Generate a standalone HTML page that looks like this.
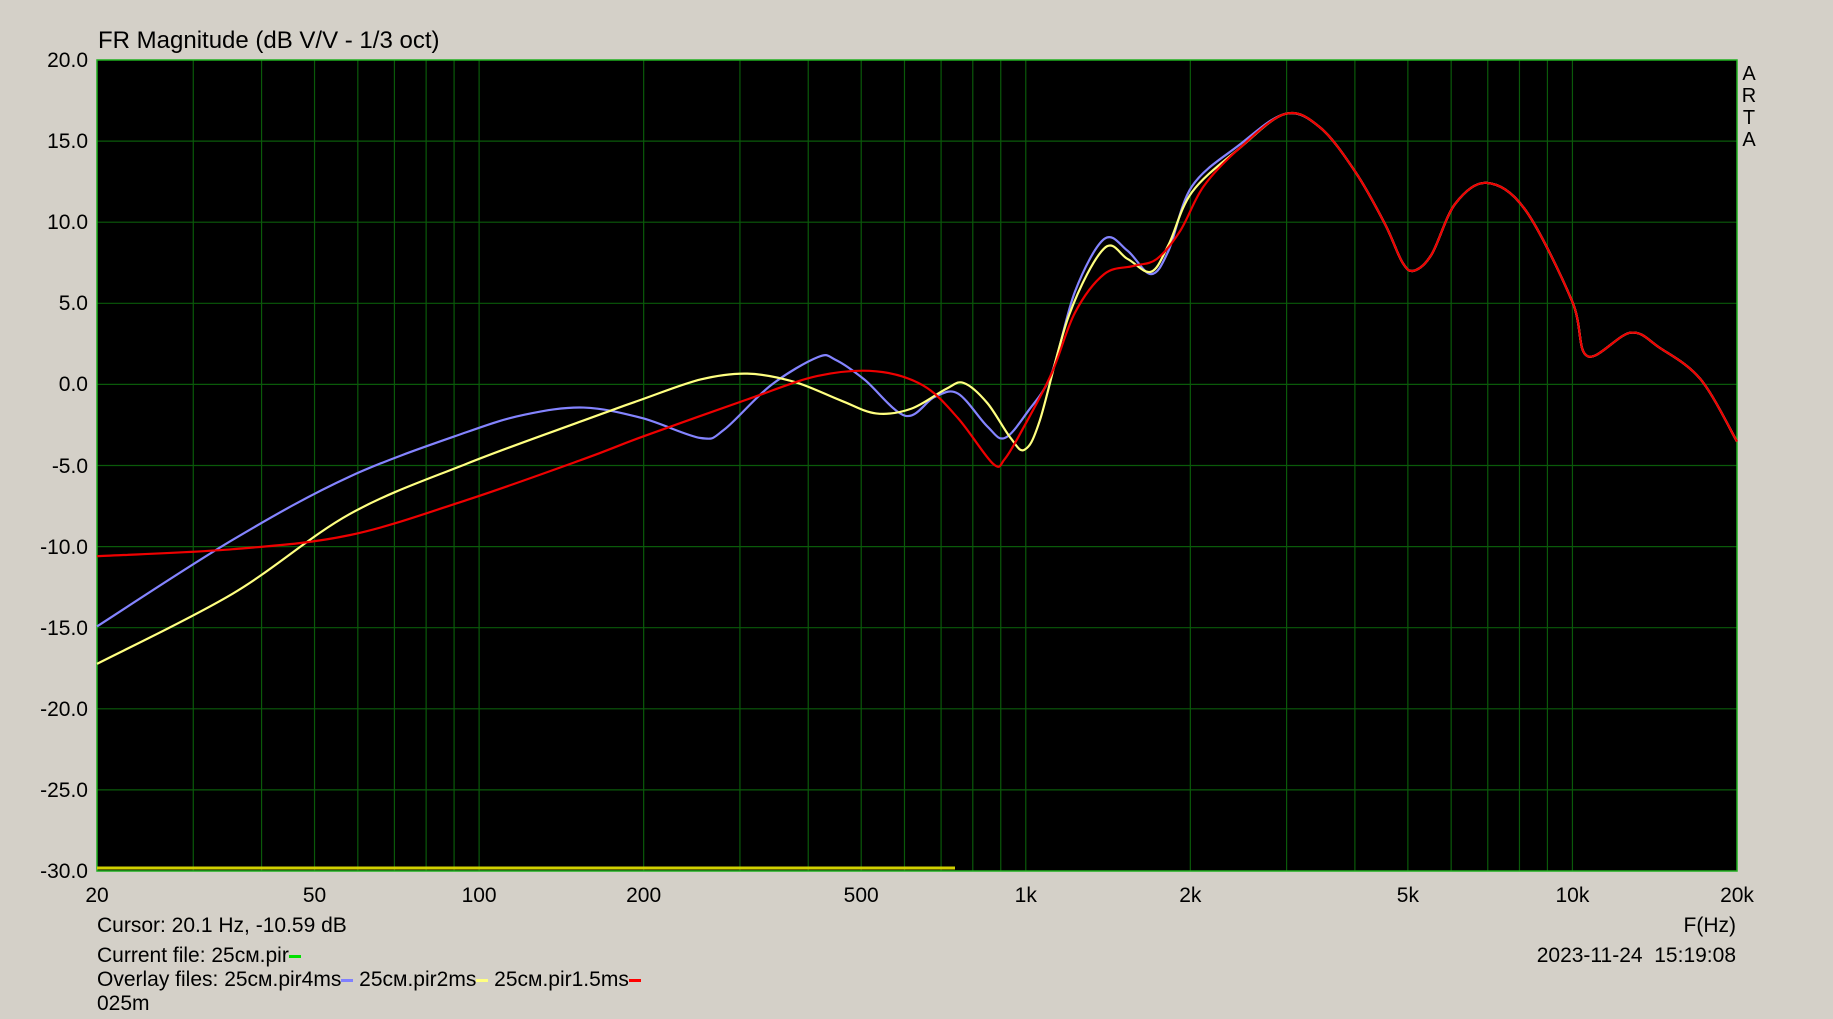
<!DOCTYPE html>
<html><head><meta charset="utf-8"><style>
html,body{margin:0;padding:0;width:1833px;height:1019px;background:#d4d0c8;overflow:hidden;font-family:"Liberation Sans",sans-serif;color:#000}
.t{position:absolute;font-size:21px;white-space:nowrap;line-height:1}
svg{position:absolute;left:0;top:0}
</style></head><body>
<svg id="s" width="1833" height="1019" xmlns="http://www.w3.org/2000/svg">
<rect x="97" y="60" width="1640" height="811" fill="#000"/>
<g id="grid" stroke="#0a5a0a" stroke-width="1.2"></g>
<rect x="97" y="60" width="1640" height="811" fill="none" stroke="#1fb01f" stroke-width="1.5"/>
<line x1="97" y1="868" x2="955" y2="868" stroke="#d0d000" stroke-width="3"/>
<g id="curves" fill="none" stroke-width="2.2" stroke-linejoin="round"></g>
</svg>
<div class="t" style="left:98px;top:29px;font-size:24px">FR Magnitude (dB V/V - 1/3 oct)</div>
<div id="yl"></div>
<div class="t" style="left:1741px;top:63px;font-size:20px;line-height:22px;width:16px;text-align:center">A<br>R<br>T<br>A</div>
<div id="xl"></div>
<div class="t" style="left:97px;top:915px">Cursor: 20.1 Hz, -10.59 dB</div>
<div class="t" style="left:97px;top:945px">Current file: 25см.pir<span style="display:inline-block;width:12px;height:3px;background:#00e000;vertical-align:middle"></span></div>
<div class="t" style="left:97px;top:969px">Overlay files: 25см.pir4ms<span style="display:inline-block;width:12px;height:3px;background:#8080ff;vertical-align:middle"></span> 25см.pir2ms<span style="display:inline-block;width:12px;height:3px;background:#ffff80;vertical-align:middle"></span> 25см.pir1.5ms<span style="display:inline-block;width:12px;height:3px;background:#ff0000;vertical-align:middle"></span></div>
<div class="t" style="left:97px;top:993px">025m</div>
<div class="t" style="right:97px;top:915px">F(Hz)</div>
<div class="t" style="right:97px;top:945px">2023-11-24&nbsp; 15:19:08</div>
<script>
var L=97,R=1737,T=60,B=871,NS="http://www.w3.org/2000/svg";
function fx(f){return L+(R-L)*Math.log10(f/20)/3}
function dy(d){return T+(20-d)*(B-T)/50}
var g=document.getElementById('grid');
function ln(x1,y1,x2,y2){var l=document.createElementNS(NS,'line');l.setAttribute('x1',x1);l.setAttribute('y1',y1);l.setAttribute('x2',x2);l.setAttribute('y2',y2);g.appendChild(l)}
var fs=[];for(var d=10;d<=10000;d*=10)for(var k=1;k<10;k++){var f=d*k;if(f>20&&f<20000)fs.push(f)}
fs.forEach(function(f){var x=fx(f);ln(x,T,x,B)});
for(var db=-25;db<=15;db+=5){ln(L,dy(db),R,dy(db))}
var yl='';for(var db=20;db>=-30;db-=5){yl+='<div class="t" style="right:'+(1833-88)+'px;top:'+(dy(db)-10)+'px">'+db.toFixed(1)+'</div>'}
document.getElementById('yl').innerHTML=yl;
var xs=[[20,'20'],[50,'50'],[100,'100'],[200,'200'],[500,'500'],[1000,'1k'],[2000,'2k'],[5000,'5k'],[10000,'10k'],[20000,'20k']];
var xl='';xs.forEach(function(a){xl+='<div class="t" style="left:'+(fx(a[0])-40)+'px;width:80px;text-align:center;top:885px">'+a[1]+'</div>'});
document.getElementById('xl').innerHTML=xl;
var tail=[[1130,110],[1160,148],[1185,192],[1200,225],[1210,232],[1225,218],[1245,175],[1272,157],[1305,180],[1345,258],[1358,305],[1395,285],[1420,298],[1455,325],[1486,378]];
var red=[[84,476],[200,470],[300,458],[400,428],[500,393],[550,374],[640,342],[700,322],[750,318],[790,330],[820,358],[850,397],[860,393],[875,368],[900,320],[920,268],[945,235],[970,228],[990,222],[1010,198],[1030,160],[1060,128],[1100,98]].concat(tail);
var blue=[[84,536],[200,462],[300,408],[400,370],[450,355],[500,349],[550,358],[600,375],[620,368],[660,330],[700,306],[715,308],[740,325],[775,356],[800,340],[820,337],[845,365],[860,375],[880,352],[900,320],[920,250],[945,205],[965,215],[985,235],[1000,215],[1020,160],[1060,125],[1100,98]].concat(tail);
var yel=[[84,568],[200,508],[300,440],[400,397],[500,360],[550,342],[600,325],[640,320],[680,327],[720,343],[750,354],[780,350],[810,333],[825,328],[845,345],[865,375],[877,385],[890,360],[915,270],[945,213],[965,222],[985,233],[1000,210],[1020,165],[1060,128],[1100,98]].concat(tail);
function path(pts,col){
 var p=pts.map(function(a){return[97+(a[0]-84)*1640/1402,60+(a[1]-52)*811/693]});
 var d='M'+p[0][0]+','+p[0][1];
 for(var i=0;i<p.length-1;i++){var p0=p[i-1]||p[i],p1=p[i],p2=p[i+1],p3=p[i+2]||p2;
  d+=' C'+(p1[0]+(p2[0]-p0[0])/6)+','+(p1[1]+(p2[1]-p0[1])/6)+' '+(p2[0]-(p3[0]-p1[0])/6)+','+(p2[1]-(p3[1]-p1[1])/6)+' '+p2[0]+','+p2[1];}
 var e=document.createElementNS(NS,'path');e.setAttribute('d',d);e.setAttribute('stroke',col);document.getElementById('curves').appendChild(e)}
path(blue,'#8484ff');path(yel,'#ffff80');path(red,'#ee0000');
</script>
</body></html>
